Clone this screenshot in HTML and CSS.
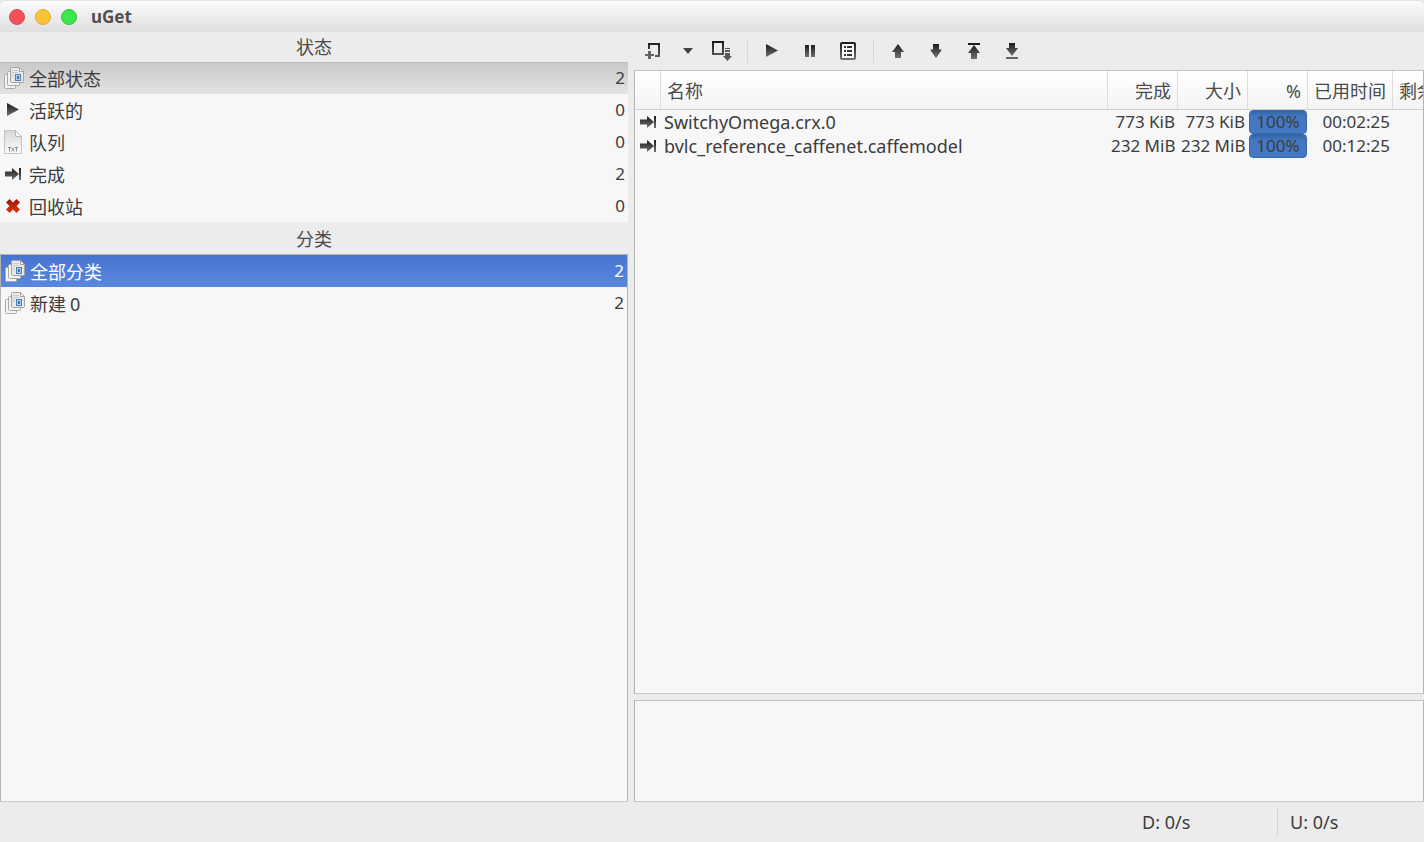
FILE: index.html
```
<!DOCTYPE html>
<html lang="zh-CN">
<head>
<meta charset="utf-8">
<title>uGet</title>
<link rel="stylesheet" href="styles.css">
</head>
<body>
<svg class="defs" aria-hidden="true">
  <defs>
    <linearGradient id="ink" x1="0" y1="0" x2="0" y2="1"><stop offset="0" stop-color="#1c1c1c"/><stop offset="1" stop-color="#707070"/></linearGradient>
    <linearGradient id="inkbox" gradientUnits="userSpaceOnUse" x1="0" y1="0" x2="0" y2="20"><stop offset="0" stop-color="#161616"/><stop offset="1" stop-color="#707070"/></linearGradient>
    <linearGradient id="red" x1="0" y1="0" x2="0" y2="1"><stop offset="0" stop-color="#9c1408"/><stop offset="1" stop-color="#e03a14"/></linearGradient>
    <linearGradient id="paper" x1="0" y1="0" x2="0" y2="1"><stop offset="0" stop-color="#d8d8d8"/><stop offset="1" stop-color="#fbfbfb"/></linearGradient>
    <symbol id="docs" viewBox="0 0 20 22">
      <rect x=".5" y="7.500" width="11" height="14" rx="1" fill="#f4f4f2" stroke="#a9a9a5"/>
      <rect x="3.500" y="4.500" width="12" height="14" rx="1" fill="#f4f4f2" stroke="#a9a9a5"/>
      <path d="M7.500.5h8l4 4v10a1 1 0 0 1-1 1h-11a1 1 0 0 1-1-1v-13a1 1 0 0 1 1-1z" fill="#e9e9e7" stroke="#a3a39f"/>
      <path d="M15.500.5v4h4z" fill="#fff" stroke="#a3a39f"/>
      <path d="M8 3.500h6M8 5.500h6M8 7.500h2M8 9.500h2" stroke="#cbcbc9"/>
      <rect x="11.500" y="7.500" width="5" height="6" fill="#b5d1ef" stroke="#4c80ba"/>
      <rect x="13" y="9" width="2" height="3" fill="#3c72ad"/>
    </symbol>
    <symbol id="play" viewBox="0 0 12 14"><path d="M0 0l12 6.500L0 13z" fill="url(#ink)"/></symbol>
    <symbol id="txt" viewBox="0 0 18 24">
      <path d="M.5.5h11l6 6v17H.5z" fill="url(#paper)" stroke="#c4c4c4"/>
      <path d="M11.500.5v6h6z" fill="#fff" stroke="#b8b8b8"/>
      <path d="M4 17.500h3M5.500 17.500v4M7.500 17.500l3 4M10.500 17.500l-3 4M11 17.500h3M12.500 17.500v4" stroke="#777" stroke-width=".8"/>
    </symbol>
    <symbol id="done" viewBox="0 0 17 12"><path d="M0 3.500h7V0l7 6-7 6V8.500H0z" fill="url(#ink)"/><path d="M14 0h2v12h-2z" fill="url(#ink)"/></symbol>
    <symbol id="trash" viewBox="0 0 14 14"><path d="M3.500 0L7 3.500 10.500 0 14 3.500 10.500 7l3.500 3.500-3.500 3.500L7 10.500 3.500 14 0 10.500 3.500 7 0 3.500z" fill="url(#red)"/></symbol>
    <symbol id="up" viewBox="0 0 12 14"><path d="M6 0l6 8H9v6H3V8H0z" fill="url(#ink)"/></symbol>
    <symbol id="down" viewBox="0 0 12 14"><path d="M3 0h6v5.500h3L6 14 0 5.500h3z" fill="url(#ink)"/></symbol>
  </defs>
</svg>
<div class="window">
  <header class="titlebar">
    <button class="dot dot-close" aria-label="关闭"></button>
    <button class="dot dot-min" aria-label="最小化"></button>
    <button class="dot dot-max" aria-label="最大化"></button>
    <h1 class="title">uGet</h1>
  </header>
  <main class="panes">
    <section class="side">
      <h2 class="heading">状态</h2>
      <ul class="list">
        <li class="row row-current"><span class="icon"><svg width="20" height="22"><use href="#docs"/></svg></span><span class="label">全部状态</span><span class="count">2</span></li>
        <li class="row"><span class="icon icon-small"><svg width="12" height="14"><use href="#play"/></svg></span><span class="label">活跃的</span><span class="count">0</span></li>
        <li class="row"><span class="icon icon-small"><svg width="18" height="24"><use href="#txt"/></svg></span><span class="label">队列</span><span class="count">0</span></li>
        <li class="row"><span class="icon icon-small"><svg width="17" height="12"><use href="#done"/></svg></span><span class="label">完成</span><span class="count">2</span></li>
        <li class="row"><span class="icon icon-small"><svg width="14" height="14"><use href="#trash"/></svg></span><span class="label">回收站</span><span class="count">0</span></li>
      </ul>
      <h2 class="heading heading-category">分类</h2>
      <ul class="list list-framed">
        <li class="row row-selected"><span class="icon"><svg width="20" height="22"><use href="#docs"/></svg></span><span class="label">全部分类</span><span class="count">2</span></li>
        <li class="row"><span class="icon"><svg width="20" height="22"><use href="#docs"/></svg></span><span class="label">新建 <span class="latin">0</span></span><span class="count">2</span></li>
      </ul>
    </section>
    <section class="content">
      <div class="toolbar">
        <button class="tool" aria-label="新建下载"><svg width="20" height="20" viewBox="0 0 20 20"><path d="M5 8V3h10v12h-4" fill="none" stroke="url(#inkbox)" stroke-width="2"/><path d="M4 10h3v3h3v2H7v3H4v-3H1v-2h3z" fill="#636363"/></svg></button>
        <button class="tool tool-menu" aria-label="新建菜单"><svg width="10" height="6" viewBox="0 0 10 6"><path d="M0 0h10L5 6z" fill="#444"/></svg></button>
        <button class="tool" aria-label="批量下载"><svg width="22" height="20" viewBox="0 0 22 20"><rect x="2" y="1" width="10" height="12" fill="none" stroke="url(#inkbox)" stroke-width="2"/><path d="M14 7h5v1h-5zM14 9h5v2h-5zM14 12h5v3h2l-4.500 5-4.500-5h2z" fill="#5b5b5b"/></svg></button>
        <span class="divider"></span>
        <button class="tool" aria-label="开始"><svg width="12" height="14"><use href="#play"/></svg></button>
        <button class="tool" aria-label="暂停"><svg width="10" height="12" viewBox="0 0 10 12"><path d="M0 0h4v12H0zM6 0h4v12H6z" fill="url(#ink)"/></svg></button>
        <button class="tool" aria-label="属性"><svg width="16" height="18" viewBox="0 0 16 18"><rect x="1" y="1" width="14" height="16" rx="1" fill="#f8f8f8" stroke="url(#ink)" stroke-width="2"/><path d="M4 4h2v2H4zM7 4h5v2H7zM4 8h2v2H4zM7 8h5v2H7zM4 12h2v2H4zM7 12h5v2H7z" fill="#333"/></svg></button>
        <span class="divider"></span>
        <button class="tool" aria-label="上移"><svg width="12" height="14"><use href="#up"/></svg></button>
        <button class="tool" aria-label="下移"><svg width="12" height="14"><use href="#down"/></svg></button>
        <button class="tool" aria-label="移到顶部"><svg width="12" height="16" viewBox="0 0 12 16"><path d="M0 0h12v2H0z" fill="#1c1c1c"/><path d="M6 2l6 8H9v6H3v-6H0z" fill="url(#ink)"/></svg></button>
        <button class="tool" aria-label="移到底部"><svg width="12" height="16" viewBox="0 0 12 16"><path d="M3 0h6v5h3l-6 8-6-8h3z" fill="url(#ink)"/><path d="M0 14h12v2H0z" fill="#666"/></svg></button>
      </div>
      <div class="downloads">
        <table class="table">
          <colgroup><col class="col-icon"><col><col class="col-size"><col class="col-size"><col class="col-percent"><col class="col-time"><col class="col-left"></colgroup>
          <thead><tr><th></th><th class="start">名称</th><th>完成</th><th>大小</th><th><span class="latin">%</span></th><th>已用时间</th><th class="start">剩余</th></tr></thead>
          <tbody>
            <tr><td class="state"><svg width="17" height="12"><use href="#done"/></svg></td><td class="start name">SwitchyOmega.crx.0</td><td>773 KiB</td><td>773 KiB</td><td class="percent"><span class="bar">100%</span></td><td>00:02:25</td><td></td></tr>
            <tr><td class="state"><svg width="17" height="12"><use href="#done"/></svg></td><td class="start name">bvlc_reference_caffenet.caffemodel</td><td>232 MiB</td><td>232 MiB</td><td class="percent"><span class="bar">100%</span></td><td>00:12:25</td><td></td></tr>
          </tbody>
        </table>
      </div>
      <div class="summary"></div>
    </section>
  </main>
  <footer class="status">
    <span class="speed speed-down">D: 0/s</span>
    <span class="speed speed-up">U: 0/s</span>
  </footer>
</div>
</body>
</html>
```
FILE: styles.css
```
* { box-sizing: border-box; }
body {
  margin: 0;
  background: #ececec;
  color: #3c3c3c;
  font-family: "Noto Sans", "Noto Sans CJK SC", sans-serif;
  font-size: 17px;
  line-height: 24px;
}
svg { display: block; flex-shrink: 0; }
.defs { position: absolute; width: 0; height: 0; }
button { border: 0; padding: 0; background: none; }
h1, h2, ul { margin: 0; padding: 0; font-weight: normal; list-style: none; }

.window { display: flex; flex-direction: column; height: 100vh; }
.titlebar {
  display: flex;
  align-items: center;
  gap: 10px;
  height: 32px;
  padding: 0 9px;
  border-top: 1px solid #e4e4e4;
  border-radius: 6px 6px 0 0;
  background: linear-gradient(#fcfcfc, #dedede);
}
.dot { width: 16px; height: 16px; border-radius: 50%; border: 1px solid; }
.dot-close { background: #f4505a; border-color: #d94850; }
.dot-min { background: #fbc436; border-color: #dcab34; }
.dot-max { background: #3be84b; border-color: #32c340; }
.title { margin-left: 4px; font-size: 17px; font-weight: bold; color: #505050; }

.panes {
  flex: 1;
  min-height: 0;
  display: grid;
  grid-template-columns: minmax(0, 628fr) minmax(0, 790fr);
  gap: 6px;
}
.side, .content { display: flex; flex-direction: column; min-height: 0; }
.heading {
  height: 30px;
  font-family: "Noto Sans CJK SC", sans-serif;
  font-size: 18px;
  line-height: 28px;
  text-align: center;
  color: #4a4a4a;
}
.heading-category { height: 32px; line-height: 32px; }
.list { background: #f7f7f7; }
.list-framed { flex: 1; border: 1px solid #b4b4b4; border-bottom-color: #c8c8c8; }
.row { display: flex; align-items: center; height: 32px; padding: 0 3px 0 4px; }
.row-current { background: linear-gradient(#c9c9c9, #e3e3e3); box-shadow: inset 0 1px #bcbcbc; }
.row-selected { background: linear-gradient(#4674d1, #5a87de); color: #fff; }
.icon { display: flex; width: 20px; justify-content: center; margin-right: 5px; }
.icon-small { padding-right: 2px; }
.label { flex: 1; font-family: "Noto Sans CJK SC", sans-serif; font-size: 18px; }
.latin { font-family: "Noto Sans", sans-serif; font-size: 18px; }

.toolbar { display: flex; align-items: center; height: 38px; padding-left: 1px; }
.tool { display: flex; align-items: center; justify-content: center; width: 38px; height: 32px; }
.tool-menu { width: 30px; }
.divider { width: 1px; height: 23px; margin: 0 5px 0 6px; background: #d6d6d6; }

.downloads, .summary { border: 1px solid #b4b4b4; border-top-color: #c2c2c2; border-bottom-color: #c8c8c8; background: #f7f7f7; }
.downloads { flex: 1; min-height: 0; overflow: hidden; }
.summary { height: 102px; margin-top: 6px; }
.table { width: 100%; table-layout: fixed; border-collapse: separate; border-spacing: 0; }
.col-icon { width: 26px; }
.col-size { width: 70px; }
.col-percent { width: 60px; }
.col-time { width: 85px; }
.col-left { width: 30px; }
th {
  height: 39px;
  padding: 0 6px;
  overflow: hidden;
  border-right: 1px solid #dcdcdc;
  border-bottom: 1px solid #cfcfcf;
  background: linear-gradient(#fff, #f4f4f4);
  font-family: "Noto Sans CJK SC", sans-serif;
  font-size: 18px;
  font-weight: normal;
  text-align: right;
  white-space: nowrap;
  color: #4a4a4a;
}
th:last-child { border-right: 0; padding-right: 0; }
td { height: 24px; padding: 0 3px; text-align: right; white-space: nowrap; }
.start { text-align: left; }
.name { font-size: 18px; }
.state { padding: 0 5px; }
.percent { padding: 0 1px; }
.bar {
  display: block;
  border: 1px solid #3568ab;
  border-radius: 4px;
  background: linear-gradient(#3565a8, #4479c2 30%, #4479c2);
  line-height: 22px;
  text-align: center;
}

.status { display: flex; align-items: center; justify-content: flex-end; height: 40px; }
.speed { padding-left: 12px; font-size: 18px; line-height: 28px; }
.speed-down { width: 147px; }
.speed-up { width: 147px; border-left: 1px solid #d6d6d6; }
```
